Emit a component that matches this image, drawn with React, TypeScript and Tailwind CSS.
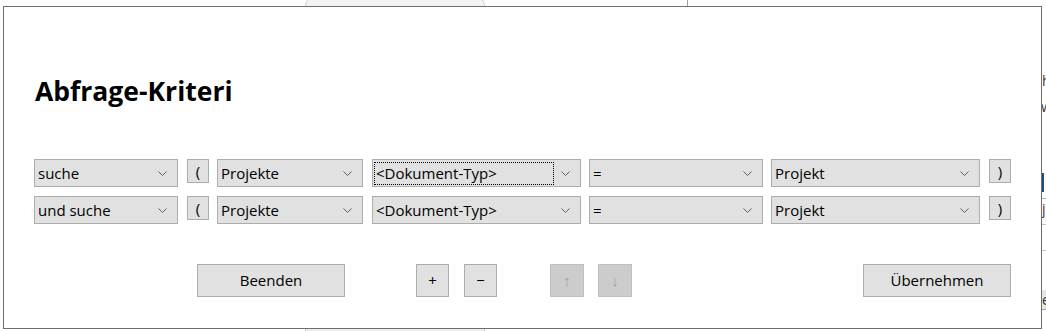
import React from 'react'

const font = { fontFamily: '"Open Sans", "Noto Sans", sans-serif' }

interface ComboProps {
  value: string
  width: string
  focused?: boolean
}

const Chevron: React.FC = () => (
  <svg width="9" height="5" viewBox="0 0 9 5" className="shrink-0">
    <path d="M0.5 0.5 L4.5 4.5 L8.5 0.5" fill="none" stroke="#5f5f5f" strokeWidth="1" />
  </svg>
)

const Combo: React.FC<ComboProps> = ({ value, width, focused }) => (
  <div className={`${width} h-[28px] flex items-center bg-[#e1e1e1] border border-[#adadad] pl-[2px] pr-[10px]`}>
    <div className="flex-1 min-w-0">
      <span
        className={`inline-block leading-[21px] px-px ${
          focused ? 'outline outline-1 outline-dotted outline-black w-[178px]' : ''
        }`}
      >
        {value}
      </span>
    </div>
    <Chevron />
  </div>
)

const Paren: React.FC<{ label: string }> = ({ label }) => (
  <div className="w-[22px] h-[24px] self-start flex items-center justify-center bg-[#e1e1e1] border border-[#adadad] text-[15px] leading-none">
    {label}
  </div>
)

const Btn: React.FC<{ label: string; width: string; disabled?: boolean }> = ({ label, width, disabled }) => (
  <div
    className={`${width} h-[33px] flex items-center justify-center border ${
      disabled ? 'bg-[#cccccc] border-[#bfbfbf] text-[#a3a3a3]' : 'bg-[#e1e1e1] border-[#adadad] text-black'
    }`}
  >
    {label}
  </div>
)

const CriteriaRow: React.FC<{ first: string; focused?: boolean }> = ({ first, focused }) => (
  <div className="flex items-start h-[28px]">
    <Combo value={first} width="w-[144px]" />
    <div className="ml-[9px]"><Paren label="(" /></div>
    <div className="ml-[8px]"><Combo value="Projekte" width="w-[146px]" /></div>
    <div className="ml-[9px]"><Combo value="<Dokument-Typ>" width="w-[209px]" focused={focused} /></div>
    <div className="ml-[8px]"><Combo value="=" width="w-[174px]" /></div>
    <div className="ml-[8px]"><Combo value="Projekt" width="w-[209px]" /></div>
    <div className="ml-[9px]"><Paren label=")" /></div>
  </div>
)

export default function App() {
  return (
    <div className="relative w-[1046px] h-[331px] bg-white overflow-hidden text-[15px] text-black" style={font}>
      {/* background application fragments */}
      <div className="absolute left-[305px] top-[-4px] w-[180px] h-[40px] rounded-[10px] border border-[#cfcfcf] bg-[#f3f3f3]" />
      <div className="absolute left-[687px] top-0 w-px h-[8px] bg-[#a0a0a0]" />
      <div className="absolute left-[305px] top-[326px] w-[180px] h-[20px] border border-[#c8c8c8] bg-[#ededed] text-center text-[15px] leading-[18px] text-[#333]">
        Kundenrentabilität
      </div>
      <div className="absolute left-[1040px] top-0 w-[10px] h-[331px] text-[14px] text-[#333]">
        <div className="absolute top-[70px] left-[2px]">h</div>
        <div className="absolute top-[96px] left-[1px]">w</div>
        <div className="absolute top-[173px] left-[2px] w-[2px] h-[19px] bg-[#1f4e79]" />
        <div className="absolute top-[198px] left-0 w-[10px] h-px bg-[#b0b0b0]" />
        <div className="absolute top-[198px] left-[2px]">j</div>
        <div className="absolute top-[224px] left-0 w-[10px] h-px bg-[#c0c0c0]" />
        <div className="absolute top-[250px] left-0 w-[10px] h-px bg-[#c0c0c0]" />
        <div className="absolute top-[290px] left-0 w-[10px] h-[20px] bg-[#e6e6e6] border-b border-[#a0a0a0] leading-[20px] pl-[2px]">e</div>
      </div>

      {/* dialog */}
      <div className="absolute left-[3px] top-[6px] w-[1039px] h-[323px] bg-white border border-[#6e6e6e] flex flex-col pl-[30px]">
        <h1 className="mt-[67px] ml-px text-[26.5px] leading-[34px] font-bold">Abfrage-Kriteri</h1>

        <div className="mt-[51px] flex flex-col gap-[9px]">
          <CriteriaRow first="suche" focused />
          <CriteriaRow first="und suche" />
        </div>

        <div className="mt-[40px] flex items-center">
          <div className="ml-[163px]"><Btn label="Beenden" width="w-[148px]" /></div>
          <div className="ml-[71px]"><Btn label="+" width="w-[33px]" /></div>
          <div className="ml-[15px]"><Btn label="−" width="w-[33px]" /></div>
          <div className="ml-[53px]"><Btn label="↑" width="w-[34px]" disabled /></div>
          <div className="ml-[14px]"><Btn label="↓" width="w-[34px]" disabled /></div>
          <div className="ml-[231px]"><Btn label="Übernehmen" width="w-[148px]" /></div>
        </div>
      </div>
    </div>
  )
}
